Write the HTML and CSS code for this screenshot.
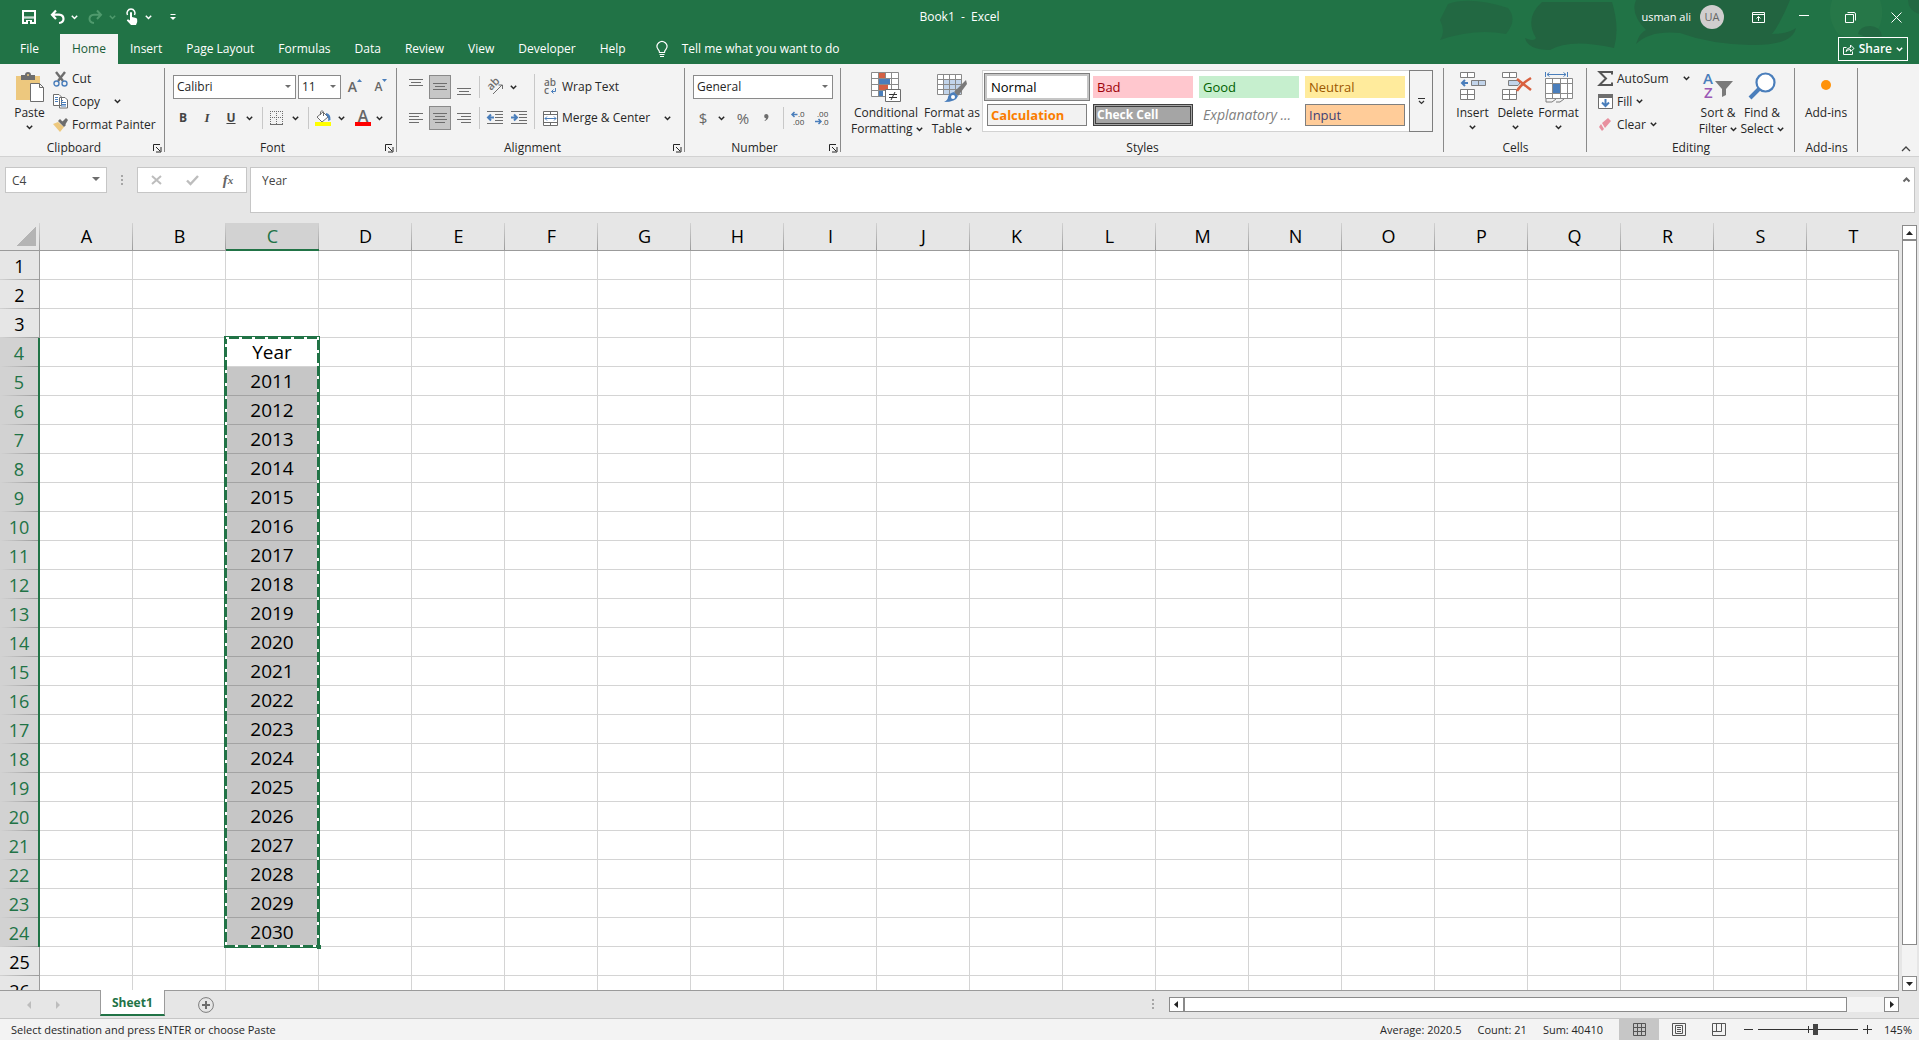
FILE: index.html
```
<!DOCTYPE html>
<html lang="en">
<head>
  <meta charset="UTF-8" />
  <title>Book1 - Excel</title>
  <link rel="stylesheet" href="styles.css">
</head>
<body>
  <!-- Shared icons -->
  <svg class="symbols" width="0" height="0">
    <symbol id="chev" viewBox="0 0 7 5"><path d="M0.8 0.8 L3.5 3.5 L6.2 0.8" fill="none" stroke="currentColor" stroke-width="1.5"/></symbol>
    <symbol id="launch" viewBox="0 0 9 9"><path d="M0.5 7 V0.5 H7 M3 3 L7 7 M8 3 V8 H3" fill="none" stroke="currentColor"/></symbol>
  </svg>

  <!-- Title bar and tabs -->
  <header class="top">
    <svg class="doodle" viewBox="0 0 489 64" width="489" height="64">
      <path fill="#226842" d="M18 4 Q40 -4 78 8 Q88 20 76 34 Q45 28 10 40 Q16 32 10 20 Z"/>
      <path fill="#226440" d="M112 2 H182 Q190 28 184 48 Q140 38 120 50 Q98 50 95 38 Q104 42 106 38 Q94 18 112 2 Z M206 0 H360 Q350 24 342 34 Q358 34 366 28 Q362 46 320 45 Q280 44 250 33 Q220 30 206 44 Q210 32 216 30 Q200 14 206 0 Z"/>
      <path fill="#267748" d="M402 0 H450 Q456 16 446 34 Q420 40 408 34 Q396 18 402 0 Z"/>
      <path fill="#226842" d="M428 34 Q430 26 440 26 Q450 26 452 36 Q440 40 428 34 Z M478 0 H489 V14 Q478 10 478 0 Z"/>
    </svg>
    <div class="titlebar">
      <div class="quick">
        <button class="q-save" aria-label="Save"><svg width="14" height="14"><path d="M1 1 H13 V13 H1 Z" fill="none" stroke="#fff" stroke-width="2"/><path d="M1 7 H13 M1 8 H13" stroke="#fff"/><path d="M4 10 H10 V14 H4 Z" fill="#fff"/><path d="M6 11 H8 V14 H6 Z" fill="#217346"/></svg></button>
        <button class="q-btn" aria-label="Undo"><svg width="15" height="14"><path d="M6 0.5 L2 4.7 L6 9 M2 4.7 H9 Q13.5 5 13.5 9 Q13.3 12.5 9 13" fill="none" stroke="#fff" stroke-width="2.2"/></svg><svg class="chev"><use href="#chev"/></svg></button>
        <button class="q-btn q-off" aria-label="Redo"><svg width="15" height="14"><path d="M9 0.5 L13 4.7 L9 9 M13 4.7 H6 Q1.5 5 1.5 9 Q1.7 12.5 6 13" fill="none" stroke="#4f9a6d" stroke-width="2"/></svg><svg class="chev"><use href="#chev"/></svg></button>
        <button class="q-btn" aria-label="Touch mode"><svg width="13" height="16"><path d="M1.5 6 A4 4 0 1 1 8.5 6" fill="none" stroke="#fff" stroke-width="1.5"/><path d="M4 3.5 Q5 2.5 6 3.5 V8 L10 9 Q11.5 9.5 11.2 11 V13 L10 16 H5 L0.8 11.5 Q1 10 2.5 10.5 L4 11.5 Z" fill="#fff"/></svg><svg class="chev"><use href="#chev"/></svg></button>
        <button class="q-more" aria-label="Customize"><svg width="6" height="6"><path d="M0.5 0.5 H5.5" stroke="#fff"/><path d="M0 3 H6 L3 6 Z" fill="#fff"/></svg></button>
      </div>
      <div class="doc-title">Book1&nbsp; -&nbsp; Excel</div>
      <div class="window">
        <span class="user">usman ali</span>
        <span class="avatar">UA</span>
        <button class="win-btn" aria-label="Ribbon display"><svg width="13" height="11"><path d="M0.5 0.5 H12.5 V10.5 H0.5 Z M0.5 2.5 H12.5 M6.5 9 V4.5 M4.5 6.5 L6.5 4.5 L8.5 6.5" fill="none" stroke="#fff"/></svg></button>
        <button class="win-btn" aria-label="Minimize"><svg width="10" height="11"><path d="M0 3.5 H10" stroke="#fff"/></svg></button>
        <button class="win-btn" aria-label="Restore"><svg width="11" height="11"><path d="M0.5 2.5 H8.5 V10.5 H0.5 Z M2.5 0.5 H9 Q10.5 0.5 10.5 2 V8.5" fill="none" stroke="#fff"/></svg></button>
        <button class="win-btn" aria-label="Close"><svg width="11" height="11"><path d="M0.5 0.5 L10.5 10.5 M10.5 0.5 L0.5 10.5" stroke="#fff"/></svg></button>
      </div>
    </div>
    <nav class="tabs">
      <button class="file">File</button>
      <button class="active">Home</button>
      <button>Insert</button>
      <button>Page Layout</button>
      <button>Formulas</button>
      <button>Data</button>
      <button>Review</button>
      <button>View</button>
      <button>Developer</button>
      <button>Help</button>
      <button class="tell"><svg width="12" height="17"><path d="M3.5 11.5 Q3.5 9.5 2 8.2 A4.9 4.9 0 1 1 10 8.2 Q8.5 9.5 8.5 11.5 Z M3.5 13.5 H8.5 M4 15.5 H8" fill="none" stroke="#fff" stroke-width="1.2"/></svg>Tell me what you want to do</button>
      <button class="share"><svg width="12" height="11"><path d="M3.5 3.5 H0.5 V10.5 H9.5 V7.5 M3 7.5 Q3.5 4 7.5 3.5 V1 L11 4.5 L7.5 7.5 V5.5 Q4.5 5.5 3 7.5" fill="none" stroke="#fff"/></svg>Share<svg class="chev"><use href="#chev"/></svg></button>
    </nav>
  </header>

  <!-- Ribbon -->
  <div class="ribbon">
    <section class="group clipboard">
      <div class="body">
        <button class="big paste"><span class="pic"><svg width="28" height="30"><path fill="#edc87e" d="M0 4 H24 V28 H0 Z"/><path fill="#6d6d6d" d="M5 3 H9 Q9 0 12 0 Q15 0 15 3 H19 V8 H5 Z"/><circle cx="12" cy="3" r="1" fill="#edc87e"/><path fill="#fff" stroke="#6d6d6d" d="M14.5 11.5 H23.5 L27.5 15.5 V29.5 H14.5 Z M23.5 11.5 V15.5 H27.5"/></svg></span>Paste<svg class="chev"><use href="#chev"/></svg></button>
        <div class="stack">
          <button class="small"><svg width="15" height="16"><path d="M3 1 L10 10 M12 1 L5 10" stroke="#6d6d6d" stroke-width="2.4"/><circle cx="3.5" cy="12.5" r="2.5" fill="none" stroke="#4a7ebb" stroke-width="1.4"/><circle cx="11.5" cy="12.5" r="2.5" fill="none" stroke="#4a7ebb" stroke-width="1.4"/></svg>Cut</button>
          <button class="small"><svg width="15" height="15"><path fill="#fff" stroke="#6d6d6d" d="M0.5 0.5 H6 L8.5 3 V11.5 H0.5 Z M6.5 3.5 H12 L14.5 6 V14 H6.5 Z"/><path stroke="#4a7ebb" d="M2 3.5 H5 M2 5.5 H5 M2 7.5 H5 M8 8.5 H13 M8 10.5 H13 M8 12 H13 M8 6.5 H10"/></svg>Copy<svg class="chev far"><use href="#chev"/></svg></button>
          <button class="small"><svg width="15" height="14"><path fill="#edc87e" d="M0 6 L5 4 L11 9 L7 14 Z"/><path fill="#6d6d6d" d="M5 3 L7 1 L13 7 L11 9 Z M9 4 L13 0 L15 2 L12 7 Z"/></svg>Format Painter</button>
        </div>
      </div>
      <div class="label launcher">Clipboard<button aria-label="Clipboard settings"><svg width="9" height="9"><use href="#launch"/></svg></button></div>
    </section>

    <section class="group font">
      <div class="body rows">
        <div class="row">
          <label class="combo face"><select aria-label="Font"><option>Calibri</option></select></label>
          <label class="combo size"><select aria-label="Font size"><option>11</option></select></label>
          <button class="tool letter grow">A<svg width="5" height="3"><path fill="#4a7ebb" d="M0 3 L2.5 0 L5 3 Z"/></svg></button>
          <button class="tool letter shrink">A<svg width="5" height="3"><path fill="#4a7ebb" d="M0 0 L2.5 3 L5 0 Z"/></svg></button>
        </div>
        <div class="row flush">
          <button class="tool bold">B</button>
          <button class="tool italic">I</button>
          <button class="tool under">U</button>
          <button class="drop" aria-label="Underline options"><svg class="chev"><use href="#chev"/></svg></button>
          <i class="sep"></i>
          <button class="tool" aria-label="Borders"><svg width="14" height="14"><path stroke="#6d6d6d" stroke-dasharray="1 1" fill="none" d="M0 0.5 H13 M0 6.5 H13 M0.5 0 V13 M6.5 0 V13 M12.5 0 V13"/><path stroke="#6d6d6d" d="M0 13.5 H13"/></svg></button>
          <button class="drop" aria-label="Border options"><svg class="chev"><use href="#chev"/></svg></button>
          <i class="sep"></i>
          <button class="tool" aria-label="Fill color"><svg width="16" height="16"><path fill="#fff" stroke="#6d6d6d" d="M2 7 L8 2 L13 7 L7 12 Z M5.5 5 V2 Q7 -1 8.5 2 V6"/><path fill="#4a7ebb" d="M11 3 Q16 4 15.5 10 L13 11 Q14 7 11 5 Z"/><path fill="#ffff00" d="M0 12 H16 V16 H0 Z"/></svg></button>
          <button class="drop" aria-label="Fill options"><svg class="chev"><use href="#chev"/></svg></button>
          <button class="color">A</button>
          <button class="drop" aria-label="Color options"><svg class="chev"><use href="#chev"/></svg></button>
        </div>
      </div>
      <div class="label launcher">Font<button aria-label="Font settings"><svg width="9" height="9"><use href="#launch"/></svg></button></div>
    </section>

    <section class="group align">
      <div class="body">
        <div class="rows">
          <div class="row">
            <button class="tool" aria-label="Top align"><svg width="14" height="18"><path stroke="#6d6d6d" d="M0 1.5 H14 M2 4.5 H12 M0 7.5 H14"/></svg></button>
            <button class="tool on" aria-label="Middle align"><svg width="14" height="18"><path stroke="#6d6d6d" d="M0 5.5 H14 M2 8.5 H12 M0 11.5 H14"/></svg></button>
            <button class="tool" aria-label="Bottom align"><svg width="14" height="18"><path stroke="#6d6d6d" d="M0 10.5 H14 M2 13.5 H12 M0 16.5 H14"/></svg></button>
            <i class="sep"></i>
            <button class="tool" aria-label="Orientation"><svg width="17" height="16"><text font-size="11" font-weight="600" fill="#6d6d6d" transform="translate(4 12) rotate(-45)">ab</text><path d="M6 15 L15 6 M11.5 6 H15.5 V10" fill="none" stroke="#6d6d6d"/></svg></button>
            <button class="drop" aria-label="Orientation options"><svg class="chev"><use href="#chev"/></svg></button>
          </div>
          <div class="row">
            <button class="tool" aria-label="Align left"><svg width="14" height="12"><path stroke="#6d6d6d" d="M0 1.5 H14 M0 4.5 H10 M0 7.5 H14 M0 10.5 H10"/></svg></button>
            <button class="tool on" aria-label="Center"><svg width="14" height="12"><path stroke="#6d6d6d" d="M0 1.5 H14 M2 4.5 H12 M0 7.5 H14 M2 10.5 H12"/></svg></button>
            <button class="tool" aria-label="Align right"><svg width="14" height="12"><path stroke="#6d6d6d" d="M0 1.5 H14 M4 4.5 H14 M0 7.5 H14 M4 10.5 H14"/></svg></button>
            <i class="sep"></i>
            <button class="tool" aria-label="Decrease indent"><svg width="16" height="14"><path stroke="#6d6d6d" d="M0 0.5 H16 M8 3.5 H16 M8 6.5 H16 M8 9.5 H16 M0 12.5 H16"/><path d="M7 6.5 H1 M4 3.5 L1 6.5 L4 9.5" fill="none" stroke="#4a7ebb" stroke-width="2"/></svg></button>
            <button class="tool" aria-label="Increase indent"><svg width="16" height="14"><path stroke="#6d6d6d" d="M0 0.5 H16 M8 3.5 H16 M8 6.5 H16 M8 9.5 H16 M0 12.5 H16"/><path d="M0 6.5 H6 M3 3.5 L6 6.5 L3 9.5" fill="none" stroke="#4a7ebb" stroke-width="2"/></svg></button>
          </div>
        </div>
        <i class="sep tall"></i>
        <div class="rows">
          <button class="small row"><svg width="15" height="16"><text x="1" y="7" font-size="10" font-weight="600" fill="#6d6d6d">ab<tspan x="1" y="15">c</tspan></text><path d="M12.5 9 V12.5 H8.5 M10.5 10.5 L8.5 12.5 L10.5 14.5" fill="none" stroke="#4a7ebb"/></svg>Wrap Text</button>
          <button class="small row"><svg width="15" height="15"><path d="M0.5 0.5 H14.5 V14.5 H0.5 Z M0.5 3.5 H14.5 M0.5 11.5 H14.5 M7.5 0.5 V3.5 M7.5 11.5 V14.5" fill="#fff" stroke="#6d6d6d"/><path d="M2 7.5 H13 M4 5.5 L2 7.5 L4 9.5 M11 5.5 L13 7.5 L11 9.5" fill="none" stroke="#4a7ebb"/></svg>Merge &amp; Center<svg class="chev far"><use href="#chev"/></svg></button>
        </div>
      </div>
      <div class="label launcher">Alignment<button aria-label="Alignment settings"><svg width="9" height="9"><use href="#launch"/></svg></button></div>
    </section>

    <section class="group number">
      <div class="body rows">
        <div class="row">
          <label class="combo format"><select aria-label="Number format"><option>General</option></select></label>
        </div>
        <div class="row flush">
          <button class="tool sign">$</button>
          <button class="drop" aria-label="Currency options"><svg class="chev"><use href="#chev"/></svg></button>
          <button class="tool sign percent">%</button>
          <button class="tool comma" aria-label="Comma style"><svg width="5" height="8"><path d="M2.5 0 A2.3 2.3 0 0 1 4.5 2.3 Q4.5 5.5 1 7 L0.5 6.3 Q2.2 5.3 2.2 4.4 A2.1 2.1 0 0 1 2.5 0" fill="#6d6d6d"/></svg></button>
          <i class="sep"></i>
          <button class="tool" aria-label="Increase decimal"><svg width="15" height="14"><text x="7" y="6" font-size="8" fill="#444">.0</text><text x="2" y="14" font-size="8" fill="#444">.00</text><path d="M6.5 3.5 H1 M3.5 1 L1 3.5 L3.5 6" fill="none" stroke="#4a7ebb" stroke-width="1.5"/></svg></button>
          <button class="tool" aria-label="Decrease decimal"><svg width="15" height="14"><text x="2" y="6" font-size="8" fill="#444">.00</text><text x="7" y="14" font-size="8" fill="#444">.0</text><path d="M0 10.5 H6 M3.5 8 L6 10.5 L3.5 13" fill="none" stroke="#4a7ebb" stroke-width="1.5"/></svg></button>
        </div>
      </div>
      <div class="label launcher">Number<button aria-label="Number settings"><svg width="9" height="9"><use href="#launch"/></svg></button></div>
    </section>

    <section class="group styles">
      <div class="body">
        <button class="big cond"><span class="pic"><svg width="30" height="30"><path fill="#fff" stroke="#8a8a8a" d="M0.5 0.5 H27.5 V24.5 H0.5 Z M7.5 0.5 V24.5 M14.5 0.5 V24.5 M20.5 0.5 V24.5 M0.5 6.5 H27.5 M0.5 12.5 H27.5 M0.5 18.5 H27.5"/><path fill="#d35f43" d="M8 1 H14 V6 H8 Z M8 13 H17 V18 H8 Z"/><path fill="#4a7ebb" d="M8 7 H19 V12 H8 Z M8 19 H12 V24 H8 Z"/><path fill="#fff" stroke="#6d6d6d" d="M14.5 17.5 H29.5 V29.5 H14.5 Z"/><path stroke="#333" d="M18 22.5 H26 M18 25.5 H26 M24 20 L20 28"/></svg></span>Conditional<br>Formatting <svg class="chev"><use href="#chev"/></svg></button>
        <button class="big table"><span class="pic"><svg width="30" height="30"><path fill="#fff" stroke="#8a8a8a" d="M0.5 2.5 H24.5 V22.5 H0.5 Z"/><path fill="#c2d4ea" d="M7 8 H24 V22 H7 Z"/><path stroke="#8a8a8a" d="M6.5 2.5 V22.5 M12.5 2.5 V22.5 M18.5 2.5 V22.5 M0.5 7.5 H24.5 M0.5 12.5 H24.5 M0.5 17.5 H24.5"/><path fill="#7a7a7a" d="M29 8 L30 12 L21 24 L17 20 Z"/><path fill="#4a7ebb" d="M17 20 L21 24 Q19 30 7 30 Q11 28 11 25 Q12 21 17 20 Z"/><circle cx="16" cy="25" r="2" fill="#fff"/></svg></span>Format as<br>Table <svg class="chev"><use href="#chev"/></svg></button>
        <div class="gallery">
          <div class="swatches">
            <button class="normal">Normal</button>
            <button class="bad">Bad</button>
            <button class="good">Good</button>
            <button class="neutral">Neutral</button>
            <button class="calc">Calculation</button>
            <button class="check">Check Cell</button>
            <button class="expl">Explanatory ...</button>
            <button class="input">Input</button>
          </div>
          <button class="more" aria-label="More styles"><svg width="7" height="7"><path d="M0 0.5 H7 M1 3 L3.5 5.5 L6 3" fill="none" stroke="#333" stroke-width="1.2"/></svg></button>
        </div>
      </div>
      <div class="label">Styles</div>
    </section>

    <section class="group cells">
      <div class="body">
        <button class="big"><span class="pic"><svg width="28" height="30"><path fill="#fff" stroke="#7d7d7d" d="M1.5 0.5 H15.5 V5.5 H1.5 Z M8.5 0.5 V5.5 M1.5 17.5 H15.5 V27.5 H1.5 Z M8.5 17.5 V27.5 M1.5 22.5 H15.5"/><path fill="#c2d4ea" stroke="#7d7d7d" d="M12.5 8.5 H26.5 V13.5 H12.5 Z M19.5 8.5 V13.5"/><path d="M9 11 H3 M6 8 L3 11 L6 14" fill="none" stroke="#4a7ebb" stroke-width="2"/></svg></span>Insert<svg class="chev"><use href="#chev"/></svg></button>
        <button class="big"><span class="pic"><svg width="30" height="30"><path fill="#fff" stroke="#7d7d7d" d="M1.5 0.5 H15.5 V5.5 H1.5 Z M8.5 0.5 V5.5 M1.5 17.5 H15.5 V27.5 H1.5 Z M8.5 17.5 V27.5 M1.5 22.5 H15.5"/><path fill="#c2d4ea" stroke="#7d7d7d" d="M7.5 8.5 H17 L19 11 L17 13.5 H7.5 Z"/><path d="M16 7 L30 18 M30 6 Q20 12 16 19" fill="none" stroke="#d9603f" stroke-width="2.5"/></svg></span>Delete<svg class="chev"><use href="#chev"/></svg></button>
        <button class="big"><span class="pic"><svg width="28" height="31"><path d="M0.5 0 V5 M22.5 0 V5 M2 2.5 H21 M4.5 0.5 L2 2.5 L4.5 4.5 M18.5 0.5 L21 2.5 L18.5 4.5" fill="none" stroke="#4a7ebb"/><path fill="#fff" stroke="#8a8a8a" d="M0.5 6.5 H27.5 V26.5 H0.5 Z M7.5 6.5 V26.5 M15.5 6.5 V26.5 M22.5 6.5 V26.5 M0.5 11.5 H27.5 M0.5 21.5 H27.5"/><path fill="#4a7ebb" d="M8 12 H15 V21 H8 Z"/><path d="M1 27 V30 H7 L11 27 M11 30 H15 L19 27" fill="none" stroke="#7d7d7d"/></svg></span>Format<svg class="chev"><use href="#chev"/></svg></button>
      </div>
      <div class="label">Cells</div>
    </section>

    <section class="group editing">
      <div class="body">
        <div class="stack">
          <button class="small"><svg width="15" height="15"><path d="M14 3.5 V1 H1.5 L8 7.5 L1.5 14 H14 V11.5" fill="none" stroke="#555" stroke-width="2"/></svg>AutoSum<svg class="chev far"><use href="#chev"/></svg></button>
          <button class="small"><svg width="15" height="15"><path d="M0.5 0.5 H14.5 V14.5 H0.5 Z" fill="#fff" stroke="#6d6d6d"/><path d="M0 0 H15 V4 H0 Z" fill="#6d6d6d"/><path d="M7.5 5 V12 M4 8.5 L7.5 12 L11 8.5" fill="none" stroke="#4a7ebb" stroke-width="2"/></svg>Fill <svg class="chev"><use href="#chev"/></svg></button>
          <button class="small"><svg width="15" height="14"><path fill="#e8909f" d="M4 5 L10 0 L13 3 L7 10 Z M3 6 L6 11 L4 13 L1 9 Z"/></svg>Clear <svg class="chev"><use href="#chev"/></svg></button>
        </div>
        <button class="big sort"><span class="pic"><svg width="30" height="30"><text x="0" y="12" font-size="15" font-weight="600" fill="#4a7ebb">A<tspan x="1" y="26" fill="#9b59b6">Z</tspan></text><path fill="#7a7a7a" d="M12 9 H30 L23 17 V23 L19 25 V17 Z"/></svg></span>Sort &amp;<br>Filter <svg class="chev"><use href="#chev"/></svg></button>
        <button class="big sort"><span class="pic"><svg width="28" height="30"><circle cx="17.5" cy="10.5" r="9" fill="#fff" stroke="#4a7ebb" stroke-width="2.2"/><path d="M11 17 L2 26" stroke="#4a7ebb" stroke-width="4"/></svg></span>Find &amp;<br>Select <svg class="chev"><use href="#chev"/></svg></button>
      </div>
      <div class="label">Editing</div>
    </section>

    <section class="group addins">
      <div class="body">
        <button class="big"><span class="pic"><svg width="14" height="28"><circle cx="7" cy="13" r="5" fill="#ff9208"/></svg></span>Add-ins</button>
      </div>
      <div class="label">Add-ins</div>
    </section>
    <button class="collapse" aria-label="Collapse ribbon"><svg width="10" height="6"><path d="M1 5 L5 1 L9 5" fill="none" stroke="#444" stroke-width="1.3"/></svg></button>
  </div>

  <!-- Formula bar -->
  <div class="formula">
    <label class="name-box"><input aria-label="Name box" value="C4"></label>
    <span class="dots"></span>
    <div class="fx">
      <button aria-label="Cancel"><svg width="11" height="10"><path d="M1 1 L10 9 M10 1 L1 9" stroke="#bdbdbd" stroke-width="2"/></svg></button>
      <button aria-label="Enter"><svg width="13" height="10"><path d="M1 5.5 L4.5 9 L12 1" fill="none" stroke="#bdbdbd" stroke-width="2.4"/></svg></button>
      <button class="fn"><em>f</em><sub>x</sub></button>
    </div>
    <div class="entry">
      <textarea aria-label="Formula">Year</textarea>
      <svg width="7" height="5"><path d="M0.5 4.5 L3.5 1.5 L6.5 4.5" fill="none" stroke="#666" stroke-width="2"/></svg>
    </div>
  </div>

  <!-- Sheet -->
  <main class="sheet">
    <div class="grid">
      <table id="cells"></table>
    </div>
    <div class="vscroll">
      <button aria-label="Scroll up"><svg width="7" height="4"><path d="M0 4 L3.5 0 L7 4 Z"/></svg></button>
      <div class="thumb"></div>
      <button aria-label="Scroll down"><svg width="7" height="4"><path d="M0 0 L3.5 4 L7 0 Z"/></svg></button>
    </div>
  </main>

  <div class="sheet-bar">
    <div class="sheet-tabs">
      <div class="sheet-nav">
        <button aria-label="Previous sheet"><svg width="4" height="8"><path d="M4 0 L0 4 L4 8 Z"/></svg></button>
        <button aria-label="Next sheet"><svg width="4" height="8"><path d="M0 0 L4 4 L0 8 Z"/></svg></button>
      </div>
      <button class="sheet-tab">Sheet1</button>
      <button class="add-sheet" aria-label="New sheet"><svg width="16" height="16"><circle cx="8" cy="8" r="7.4" fill="none" stroke="#7d7d7d"/><path d="M8 4 V12 M4 8 H12" stroke="#6d6d6d" stroke-width="2"/></svg></button>
      <span class="dots"></span>
    </div>
    <div class="hscroll">
      <button aria-label="Scroll left"><svg width="4" height="7"><path d="M4 0 L0 3.5 L4 7 Z"/></svg></button>
      <div class="thumb"></div>
      <button aria-label="Scroll right"><svg width="4" height="7"><path d="M0 0 L4 3.5 L0 7 Z"/></svg></button>
    </div>
  </div>

  <!-- Status bar -->
  <footer class="status">
    <span class="message">Select destination and press ENTER or choose Paste</span>
    <span>Average: 2020.5</span>
    <span>Count: 21</span>
    <span>Sum: 40410</span>
    <div class="views">
      <button class="on" aria-label="Normal view"><svg width="13" height="13"><path d="M0.5 0.5 H12.5 V12.5 H0.5 Z M4.5 0 V13 M8.5 0 V13 M0 4.5 H13 M0 8.5 H13" fill="none" stroke="#555"/></svg></button>
      <button aria-label="Page layout view"><svg width="14" height="13"><path d="M0.5 0.5 H13.5 V12.5 H0.5 Z M3.5 2.5 H10.5 V10.5 H3.5 Z M5 4.5 H9 M5 6.5 H9 M5 8.5 H9" fill="none" stroke="#555"/></svg></button>
      <button aria-label="Page break view"><svg width="14" height="13"><path d="M0.5 0.5 H13.5 V12.5 H0.5 Z M4.5 0 V8.5 M9.5 0 V8.5 M0 8.5 H9.5" fill="none" stroke="#555"/></svg></button>
    </div>
    <button class="zoom-btn" aria-label="Zoom out"><svg width="9" height="9"><path d="M0 4.5 H9" stroke="#333"/></svg></button>
    <input class="zoom" type="range" min="0" max="100" value="58" aria-label="Zoom">
    <button class="zoom-btn" aria-label="Zoom in"><svg width="9" height="9"><path d="M0 4.5 H9 M4.5 0 V9" stroke="#333"/></svg></button>
    <button class="percent-btn">145%</button>
  </footer>

  <script src="script.js"></script>
</body>
</html>
```
FILE: styles.css
```
* {
  box-sizing: border-box;
}
body {
  margin: 0;
  height: 100vh;
  display: flex;
  flex-direction: column;
  overflow: hidden;
  background: #e6e6e6;
  color: #262626;
  font-family: 'Segoe UI', 'Open Sans', sans-serif;
  font-size: 12px;
  line-height: 16px;
}
button, input, select, textarea {
  font: inherit;
  color: inherit;
  margin: 0;
  padding: 0;
  border: 0;
  background: none;
}
button {
  display: flex;
  align-items: center;
  justify-content: center;
  white-space: nowrap;
}
svg {
  display: block;
  flex: none;
  overflow: visible;
}
.symbols {
  position: absolute;
}
.chev {
  width: 7px;
  height: 5px;
}

/* Title bar */
.top {
  position: relative;
  background: #217346;
  color: #fff;
  height: 64px;
  flex: none;
}
.doodle {
  position: absolute;
  right: 0;
  top: 0;
  overflow: hidden;
}
.titlebar {
  position: relative;
  display: grid;
  grid-template-columns: 1fr auto 1fr;
  align-items: center;
  height: 34px;
}
.quick {
  display: flex;
  align-items: center;
  padding-left: 22px;
}
.q-save {
  margin-right: 14px;
}
.q-btn {
  gap: 6px;
  width: 38px;
  justify-content: flex-start;
}
.q-off {
  color: #4f9a6d;
}
.q-more {
  margin-left: 6px;
}
.window {
  display: flex;
  align-items: center;
  justify-content: flex-end;
}
.user {
  font-size: 11px;
}
.avatar {
  width: 24px;
  height: 24px;
  margin: 0 11px 0 9px;
  border-radius: 50%;
  background: #d0cece;
  color: #666;
  font-size: 11px;
  line-height: 24px;
  text-align: center;
}
.win-btn {
  width: 46px;
  height: 30px;
}

/* Tabs */
.tabs {
  position: relative;
  display: flex;
  height: 30px;
}
.tabs button {
  padding: 0 12px;
}
.tabs .file {
  padding: 0 21px 0 20px;
}
.tabs .active {
  background: #f3f3f3;
  color: #185c37;
}
.tabs .tell {
  gap: 14px;
  padding-left: 18px;
}
.tabs .share {
  height: 24px;
  margin: 3px 11px 0 auto;
  padding: 0 4px;
  gap: 4px;
  border: 1px solid #fff;
  font-weight: 600;
}

/* Ribbon */
.ribbon {
  display: flex;
  flex: none;
  height: 93px;
  padding-top: 3px;
  background: #f3f3f3;
  border-bottom: 1px solid #d2d2d2;
}
.group {
  position: relative;
  display: flex;
  flex-direction: column;
}
.group::after {
  content: "";
  position: absolute;
  right: 0;
  top: 1px;
  bottom: 4px;
  width: 1px;
  background: #8a8a8a;
}
.body {
  display: flex;
  height: 71px;
}
.label {
  position: relative;
  height: 18px;
  line-height: 20px;
  text-align: center;
}
.launcher {
  padding-right: 17px;
}
.label button {
  position: absolute;
  right: 3px;
  top: 6px;
}
.stack {
  display: flex;
  flex-direction: column;
}
.small {
  justify-content: flex-start;
  height: 23px;
  gap: 4px;
}
.small .far {
  margin-left: 10px;
}
.big {
  display: block;
  align-self: flex-start;
  width: 43px;
  padding-top: 5px;
  text-align: center;
  line-height: 16px;
}
.big .pic {
  display: flex;
  justify-content: center;
  height: 33px;
}
.big > .chev {
  margin: 4px auto 0;
}
.big br ~ .chev {
  display: inline-block;
  margin: 0;
  vertical-align: middle;
}
.rows {
  display: flex;
  flex-direction: column;
  flex: none;
  gap: 7px;
  padding-top: 8px;
}
.row {
  display: flex;
  align-items: center;
  height: 24px;
}
.row.flush {
  margin-left: -2px;
}
.tool {
  width: 24px;
  height: 24px;
  color: #444;
}
.drop {
  width: 13px;
  height: 24px;
}
.sep {
  width: 1px;
  height: 22px;
  margin: 0 2px 0 6px;
  background: #c8c8c8;
}
.clipboard {
  width: 165px;
}
.clipboard .paste {
  margin: 0 2px 0 8px;
}

.combo {
  position: relative;
  height: 24px;
  background: #fff;
  border: 1px solid #8a8a8a;
}
.combo select {
  appearance: none;
  width: 100%;
  height: 22px;
  padding-left: 3px;
}
.combo::after, .name-box::after {
  content: "";
  position: absolute;
  right: 4px;
  top: 9px;
  border: 3px solid transparent;
  border-top-color: #6d6d6d;
  border-bottom: 0;
}
.font {
  width: 232px;
}
.font .body {
  padding-left: 8px;
}
.font .row:first-child {
  gap: 2px;
}
.face {
  width: 123px;
}
.size {
  width: 43px;
}
.letter {
  font-weight: 600;
  font-size: 14px;
  color: #666;
}
.letter svg {
  align-self: flex-start;
  margin-top: 4px;
}
.shrink {
  font-size: 12px;
}
.bold {
  font-weight: 700;
}
.italic {
  font: italic 700 13px 'Liberation Serif', serif;
}
.under {
  font-weight: 700;
  text-decoration: underline;
}
.color {
  width: 16px;
  height: 16px;
  margin: 0 2px 0 7px;
  border-bottom: 4px solid #f00;
  color: #666;
  font-size: 16px;
  font-weight: 600;
  line-height: 12px;
}

.align {
  width: 288px;
}
.align .body {
  padding-left: 7px;
}
.align .on {
  background: #c6c6c6;
  border: 1px solid #8a8a8a;
  width: 22px;
  margin: 0 1px;
}
.align .sep {
  margin: 0 3px;
}
.align .tall {
  height: 55px;
  margin: 7px 8px 0 3px;
}

.number {
  width: 156px;
}
.number .body {
  padding-left: 8px;
}
.format {
  width: 140px;
}
.sign {
  font-size: 15px;
  color: #666;
}
.percent {
  margin-left: 3px;
}
.comma {
  width: 22px;
}

.styles {
  width: 603px;
}
.styles .body {
  padding-left: 10px;
}
.cond {
  width: 70px;
}
.table {
  width: 56px;
  margin: 0 2px 0 3px;
}
.gallery {
  display: flex;
  height: 62px;
  margin-top: 3px;
}
.swatches {
  display: grid;
  grid-template-columns: repeat(4, 100px);
  grid-auto-rows: 22px;
  gap: 6px;
  padding: 5px 4px;
  background: #fff;
  border: 1px solid #d2d2d2;
  border-right: 0;
}
.swatches button {
  justify-content: flex-start;
  padding-left: 4px;
  font-size: 13px;
}
.swatches .normal {
  color: #000;
  outline: 2px solid #c6c6c6;
  box-shadow: 0 0 0 3px #7d7d7d;
}
.swatches .bad {
  background: #ffc7ce;
  color: #9c0006;
}
.swatches .good {
  background: #c6efce;
  color: #006100;
}
.swatches .neutral {
  background: #ffeb9c;
  color: #9c5700;
}
.swatches .calc {
  background: #f2f2f2;
  color: #fa7d00;
  font-weight: 700;
  border: 1px solid #7f7f7f;
  padding-left: 3px;
}
.swatches .check {
  background: #a5a5a5;
  color: #fff;
  font-weight: 700;
  font-size: 12px;
  border: 3px double #3f3f3f;
  padding-left: 1px;
}
.swatches .expl {
  color: #7f7f7f;
  font-style: italic;
  font-size: 14px;
}
.swatches .input {
  background: #ffcc99;
  color: #3f3f76;
  border: 1px solid #7f7f7f;
  padding-left: 3px;
}
.more {
  width: 24px;
  border: 1px solid #7d7d7d;
}

.cells {
  width: 143px;
}
.cells .body {
  padding-left: 7px;
}
.editing {
  width: 208px;
}
.editing .body {
  padding-left: 11px;
}
.editing .stack {
  width: 98px;
}
.sort {
  width: 44px;
}
.addins {
  width: 63px;
}
.addins .big {
  width: 62px;
}
.collapse {
  align-self: flex-end;
  margin: 0 8px 4px auto;
}

/* Formula bar */
.formula {
  display: flex;
  align-items: flex-start;
  flex: none;
  height: 66px;
  padding: 10px 4px 0 5px;
}
.name-box {
  position: relative;
  width: 102px;
  height: 26px;
  background: #fff;
  border: 1px solid #c6c6c6;
}
.name-box input {
  width: 80px;
  height: 24px;
  padding-left: 6px;
  color: #444;
}
.name-box::after {
  border-width: 4px 4px 0;
  right: 6px;
}
.dots {
  width: 2px;
  height: 10px;
  background: repeating-linear-gradient(#a6a6a6 0 2px, transparent 2px 4px);
}
.formula .dots {
  margin: 8px 14px;
}
.fx {
  display: flex;
  width: 110px;
  height: 26px;
  margin-right: 3px;
  background: #fff;
  border: 1px solid #c6c6c6;
}
.fx button {
  flex: 1;
}
.fn {
  font-family: 'Liberation Serif', serif;
  font-size: 15px;
  font-weight: 700;
  color: #666;
}
.fn sub {
  font-size: 11px;
  font-style: italic;
}
.entry {
  display: flex;
  flex: 1;
  height: 46px;
  padding: 9px 4px 0 11px;
  background: #fff;
  border: 1px solid #c6c6c6;
}
.entry textarea {
  flex: 1;
  height: 30px;
  margin-top: -5px;
  resize: none;
  outline: 0;
  color: #444;
  line-height: 18px;
}

/* Sheet */
.sheet {
  display: flex;
  flex: 1;
  min-height: 0;
}
.grid {
  position: relative;
  flex: 1;
  min-width: 0;
  overflow: hidden;
  border-bottom: 1px solid #9b9b9b;
}
.grid::after {
  content: "";
  position: absolute;
  right: 0;
  top: 27px;
  bottom: 0;
  width: 1px;
  background: #9b9b9b;
}
#cells {
  table-layout: fixed;
  width: 1900px;
  border-spacing: 0;
  color: #000;
  font-size: 18px;
  line-height: 24px;
}
#cells th {
  padding: 0;
  font-weight: 400;
}
#cells thead th {
  width: 93px;
  height: 28px;
  padding-bottom: 2px;
  border-bottom: 1px solid #9b9b9b;
  background: linear-gradient(#d2d2d2, #9b9b9b) right / 1px 100% no-repeat #e6e6e6;
}
#cells thead th:first-child {
  width: 40px;
}
#cells thead th.sel {
  background-color: #d2d2d2;
  color: #217346;
  padding-bottom: 1px;
  border-bottom: 2px solid #217346;
}
#cells tbody th {
  height: 29px;
  padding-top: 1px;
  border-right: 1px solid #9b9b9b;
  background: linear-gradient(to right, #d2d2d2, #9b9b9b) bottom / 100% 1px no-repeat #e6e6e6;
}
#cells tbody th.sel {
  background-color: #d2d2d2;
  color: #217346;
  border-right: 2px solid #217346;
}
#cells td {
  position: relative;
  height: 29px;
  padding: 0;
  background: #fff;
  border: solid #d4d4d4;
  border-width: 0 1px 1px 0;
  font-size: 19px;
  text-align: center;
}
#cells td.sel {
  background: #c6c6c6;
  border-bottom-color: #a3a3a3;
}
.corner {
  width: 20px;
  height: 20px;
  margin-left: 16px;
  background: linear-gradient(135deg, transparent 50%, #b4b4b4 50%);
}
/* Copied range outline, starts in the first cell */
.ants {
  position: absolute;
  z-index: 2;
  left: -2px;
  top: -2px;
}

.vscroll {
  display: flex;
  flex-direction: column;
  width: 20px;
  padding: 2px 2px 0 3px;
  fill: #222;
}
.vscroll button, .hscroll button {
  width: 15px;
  height: 15px;
  background: #fff;
  border: 1px solid #8a8a8a;
}
.vscroll .thumb {
  flex: 1;
  width: 15px;
  margin-bottom: 31px;
  background: #fff;
  border: 1px solid #8a8a8a;
  box-shadow: 0 31px #f3f3f3;
}

/* Sheet tabs */
.sheet-bar {
  display: flex;
  flex: none;
  height: 27px;
  padding-right: 20px;
}
.sheet-tabs {
  display: flex;
  flex: 8;
}
.sheet-nav {
  display: flex;
  gap: 25px;
  width: 100px;
  padding-left: 27px;
  fill: #bdbdbd;
}
.sheet-tab {
  height: 26px;
  margin-top: -1px;
  padding: 2px 11px 0;
  background: #fff;
  border: solid #9b9b9b;
  border-width: 0 1px 2px;
  border-bottom-color: #217346;
  color: #217346;
  font-weight: 700;
  z-index: 1;
}
.add-sheet {
  margin-left: 33px;
}
.sheet-bar .dots {
  margin: 8px 15px 0 auto;
}
.hscroll {
  display: flex;
  flex: 5;
  height: 15px;
  margin-top: 6px;
  background: #f3f3f3;
  fill: #222;
}
.hscroll .thumb {
  flex: 1;
  margin-right: 37px;
  background: #fff;
  border: 1px solid #8a8a8a;
}

/* Status bar */
.status {
  display: flex;
  align-items: center;
  flex: none;
  height: 22px;
  padding: 0 7px 0 11px;
  background: #f3f3f3;
  border-top: 1px solid #c6c6c6;
  font-size: 11px;
}
.status span {
  margin-right: 16px;
}
.status .message {
  margin-right: auto;
}
.views {
  display: flex;
  height: 21px;
}
.views button {
  width: 40px;
}
.views .on {
  background: #c6c6c6;
}
.zoom-btn {
  margin: 0 5px;
}
.zoom {
  appearance: none;
  width: 100px;
  height: 10px;
  background: linear-gradient(#333, #333) 50% 50% / 1px 7px no-repeat, linear-gradient(#333, #333) 0 50% / 100% 1px no-repeat;
}
.zoom::-webkit-slider-thumb {
  appearance: none;
  width: 5px;
  height: 11px;
  background: #444;
}
.percent-btn {
  margin-left: 7px;
}
```
FILE: script.js
```
const FIRST = 4;
const LAST = 24;
const COLS = "ABCDEFGHIJKLMNOPQRST".split("");

function outline(rows) {
  const h = rows * 29;
  return `
    <svg class="ants" width="98" height="${h + 5}">
      <rect x="1.5" y="1.5" width="93" height="${h}" fill="none" stroke="#217346" stroke-width="3"/>
      <rect x="2" y="2" width="92" height="${h - 1}" fill="none" stroke="#fff" stroke-width="2" stroke-dasharray="3 10"/>
      <path fill="#217346" d="M93 ${h} h4 v4 h-4 z"/>
    </svg>`;
}

function renderSheet() {
  let html = '<thead><tr><th><div class="corner"></div></th>';
  COLS.forEach(c => {
    html += `<th class="${c === "C" ? "sel" : ""}">${c}</th>`;
  });
  html += '</tr></thead><tbody>';

  for (let r = 1; r <= 26; r++) {
    const inRange = r >= FIRST && r <= LAST;
    html += `<tr><th class="${inRange ? "sel" : ""}">${r}</th>`;
    COLS.forEach(c => {
      if (c !== "C" || !inRange) {
        html += '<td></td>';
      } else if (r === FIRST) {
        html += `<td>Year${outline(LAST - FIRST + 1)}</td>`;
      } else {
        html += `<td class="sel">${2006 + r}</td>`;
      }
    });
    html += '</tr>';
  }

  document.getElementById('cells').innerHTML = html + '</tbody>';
}

renderSheet();
```
